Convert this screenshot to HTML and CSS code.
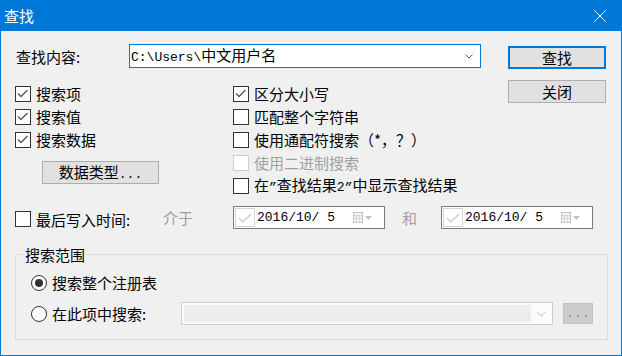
FILE: index.html
```html
<!DOCTYPE html>
<html>
<head>
    <title>查找</title>
    <link rel="stylesheet" href="styles.css">
</head>
<body>
    <div class="window">
        <div class="titlebar">
            <span class="title">查找</span>
            <svg class="close" width="12" height="12" viewBox="0 0 12 12">
                <path d="M0.5 0.5 L11.5 11.5 M11.5 0.5 L0.5 11.5" stroke="#fff" stroke-width="1" fill="none"/>
            </svg>
        </div>

        <div class="content">
            <div class="top">
                <div class="main">
                    <div class="find-row">
                        <span class="find-label">查找内容:</span>
                        <div class="combo">
                            <span><span class="mono">C:\Users\</span>中文用户名</span>
                            <svg width="8" height="5" viewBox="0 0 8 5">
                                <path d="M0.5 0.5 L4 4 L7.5 0.5" stroke="#606060" fill="none"/>
                            </svg>
                        </div>
                    </div>

                    <div class="options">
                        <div class="col col-left">
                            <div class="check-row"><span class="box"><svg class="tick" width="14" height="14" viewBox="0 0 14 14"><path d="M2 6.5 L5 9.5 L11.5 3"/></svg></span>搜索项</div>
                            <div class="check-row"><span class="box"><svg class="tick" width="14" height="14" viewBox="0 0 14 14"><path d="M2 6.5 L5 9.5 L11.5 3"/></svg></span>搜索值</div>
                            <div class="check-row"><span class="box"><svg class="tick" width="14" height="14" viewBox="0 0 14 14"><path d="M2 6.5 L5 9.5 L11.5 3"/></svg></span>搜索数据</div>
                            <button class="btn btn-types">数据类型<span class="mono">...</span></button>
                        </div>
                        <div class="col col-right">
                            <div class="check-row"><span class="box"><svg class="tick" width="14" height="14" viewBox="0 0 14 14"><path d="M2 6.5 L5 9.5 L11.5 3"/></svg></span>区分大小写</div>
                            <div class="check-row"><span class="box"></span>匹配整个字符串</div>
                            <div class="check-row"><span class="box"></span>使用通配符搜索（*，？）</div>
                            <div class="check-row disabled"><span class="box"></span>使用二进制搜索</div>
                            <div class="check-row"><span class="box"></span><span>在<span class="mono">”</span>查找结果<span class="mono">2”</span>中显示查找结果</span></div>
                        </div>
                    </div>
                </div>

                <div class="side">
                    <button class="btn btn-default">查找</button>
                    <button class="btn">关闭</button>
                </div>
            </div>

            <div class="date-row">
                <div class="check-row date-check"><span class="box"></span>最后写入时间:</div>
                <span class="between">介于</span>
                <div class="datebox">
                    <span class="mini-check"><svg width="18" height="18" viewBox="0 0 18 18"><path d="M3 9 L7 13 L15 5" stroke="#c8c8c8" stroke-width="1.2" fill="none"/></svg></span>
                    <span class="mono date-text">2016/10/ 5</span>
                    <svg class="cal" width="20" height="11" viewBox="0 0 20 11">
                        <rect x="0.5" y="0.5" width="9" height="10" fill="#f4f4f4" stroke="#c4c4c4"/>
                        <path d="M0.5 3.5 H9.5 M0.5 6.5 H9.5 M3.5 3.5 V10.5 M6.5 3.5 V10.5" stroke="#d4d4d4"/>
                        <path d="M12 4 L19 4 L15.5 8 Z" fill="#c4c4c4"/>
                    </svg>
                </div>
                <span class="and">和</span>
                <div class="datebox">
                    <span class="mini-check"><svg width="18" height="18" viewBox="0 0 18 18"><path d="M3 9 L7 13 L15 5" stroke="#c8c8c8" stroke-width="1.2" fill="none"/></svg></span>
                    <span class="mono date-text">2016/10/ 5</span>
                    <svg class="cal" width="20" height="11" viewBox="0 0 20 11">
                        <rect x="0.5" y="0.5" width="9" height="10" fill="#f4f4f4" stroke="#c4c4c4"/>
                        <path d="M0.5 3.5 H9.5 M0.5 6.5 H9.5 M3.5 3.5 V10.5 M6.5 3.5 V10.5" stroke="#d4d4d4"/>
                        <path d="M12 4 L19 4 L15.5 8 Z" fill="#c4c4c4"/>
                    </svg>
                </div>
            </div>

            <fieldset class="group">
                <legend>搜索范围</legend>
                <div class="radio-row">
                    <span class="radio selected"></span>搜索整个注册表
                </div>
                <div class="radio-row">
                    <div class="radio-label"><span class="radio"></span>在此项中搜索:</div>
                    <div class="combo-disabled">
                        <span class="combo-field"></span>
                        <svg width="10" height="6" viewBox="0 0 10 6">
                            <path d="M0.5 0.5 L5 5 L9.5 0.5" stroke="#c0c0c0" fill="none"/>
                        </svg>
                    </div>
                    <span class="dots-btn">...</span>
                </div>
            </fieldset>
        </div>
    </div>
</body>
</html>
```

FILE: styles.css
```css
* {
    box-sizing: border-box;
}

body {
    margin: 0;
    font-family: "Noto Sans CJK SC", sans-serif;
    font-size: 15px;
    line-height: 17px;
    color: #000;
    background-color: #f0f0f0;
}

.mono {
    font-family: "Liberation Mono", monospace;
    font-size: 13px;
}

.window {
    width: 622px;
    height: 356px;
    border: 1px solid #0078d7;
    border-top: none;
    background-color: #f0f0f0;
}

.titlebar {
    height: 31px;
    margin: 0 -1px;
    padding: 0 16px 0 4px;
    background-color: #0078d7;
    color: #fff;
    display: flex;
    align-items: center;
    justify-content: space-between;
}

.content {
    padding-left: 14px;
}

.top {
    display: flex;
}

.main {
    width: 466px;
    padding-top: 13px;
}

.find-row {
    display: flex;
    align-items: center;
    height: 24px;
}

.find-label {
    width: 114px;
    padding-left: 1px;
}

.combo {
    width: 352px;
    height: 24px;
    border: 1px solid #0078d7;
    background-color: #fff;
    padding: 0 7px 0 1px;
    display: flex;
    align-items: center;
    justify-content: space-between;
}

.options {
    display: flex;
    margin-top: 14px;
}

.col-left {
    width: 218px;
}

.check-row {
    display: flex;
    align-items: center;
    gap: 5px;
    height: 23px;
    white-space: nowrap;
}

.box {
    width: 16px;
    height: 16px;
    flex: none;
    border: 1px solid #333;
    background-color: #fff;
}

.tick {
    display: block;
}

.tick path {
    stroke: #555;
    stroke-width: 1.3;
    fill: none;
}

.disabled {
    color: #a0a0a0;
}

.disabled .box {
    border-color: #ccc;
}

.btn {
    font: inherit;
    line-height: 17px;
    color: #000;
    background-color: #e1e1e1;
    border: 1px solid #adadad;
    padding: 0;
    height: 23px;
}

.btn-types {
    width: 117px;
    margin: 10px 0 0 27px;
}

.side {
    margin-left: 27px;
    padding-top: 15px;
    display: flex;
    flex-direction: column;
    gap: 11px;
}

.side .btn {
    width: 98px;
}

.btn-default {
    border: 2px solid #0078d7;
}

.date-row {
    display: flex;
    align-items: center;
    height: 23px;
    margin-top: 9px;
}

.date-check {
    width: 148px;
    padding-top: 3px;
}

.between {
    width: 70px;
    color: #a0a0a0;
}

.and {
    width: 56px;
    padding-left: 17px;
    color: #a0a0a0;
}

.datebox {
    width: 152px;
    height: 23px;
    border: 1px solid #7a7a7a;
    background-color: #fff;
    padding-left: 1px;
    display: flex;
    align-items: center;
}

.mini-check {
    width: 20px;
    height: 19px;
    border: 1px solid #d4d4d4;
    display: flex;
    align-items: center;
    justify-content: center;
}

.date-text {
    margin-left: 2px;
    color: #000;
}

.cal {
    margin-left: 18px;
}

.group {
    width: 593px;
    margin: 17px 0 0 0;
    padding: 8px 0 14px 0;
    border: 1px solid #dcdcdc;
    min-width: 0;
}

.group legend {
    margin-left: 7px;
    padding: 0 2px;
}

.radio-row {
    display: flex;
    align-items: center;
    gap: 5px;
    height: 23px;
    margin-left: 15px;
}

.radio-row + .radio-row {
    margin-top: 8px;
    gap: 0;
}

.radio-label {
    width: 150px;
    display: flex;
    align-items: center;
    gap: 5px;
}

.radio {
    width: 16px;
    height: 16px;
    flex: none;
    border: 1px solid #333;
    border-radius: 50%;
    background-color: #fff;
    display: flex;
    align-items: center;
    justify-content: center;
}

.radio.selected::after {
    content: "";
    width: 8px;
    height: 8px;
    border-radius: 50%;
    background-color: #333;
}

.combo-disabled {
    width: 372px;
    height: 23px;
    border: 1px solid #ccc;
    background-color: #fbfbfb;
    padding: 2px 6px 2px 2px;
    display: flex;
    align-items: center;
    justify-content: space-between;
}

.combo-field {
    width: 347px;
    height: 17px;
    background-color: #ececec;
}

.dots-btn {
    width: 30px;
    height: 21px;
    margin-left: 10px;
    background-color: #ccc;
    border: 1px solid #c2c2c2;
    color: #8a8a8a;
    font-family: "Liberation Mono", monospace;
    font-size: 13px;
    line-height: 19px;
    text-align: center;
}
```
